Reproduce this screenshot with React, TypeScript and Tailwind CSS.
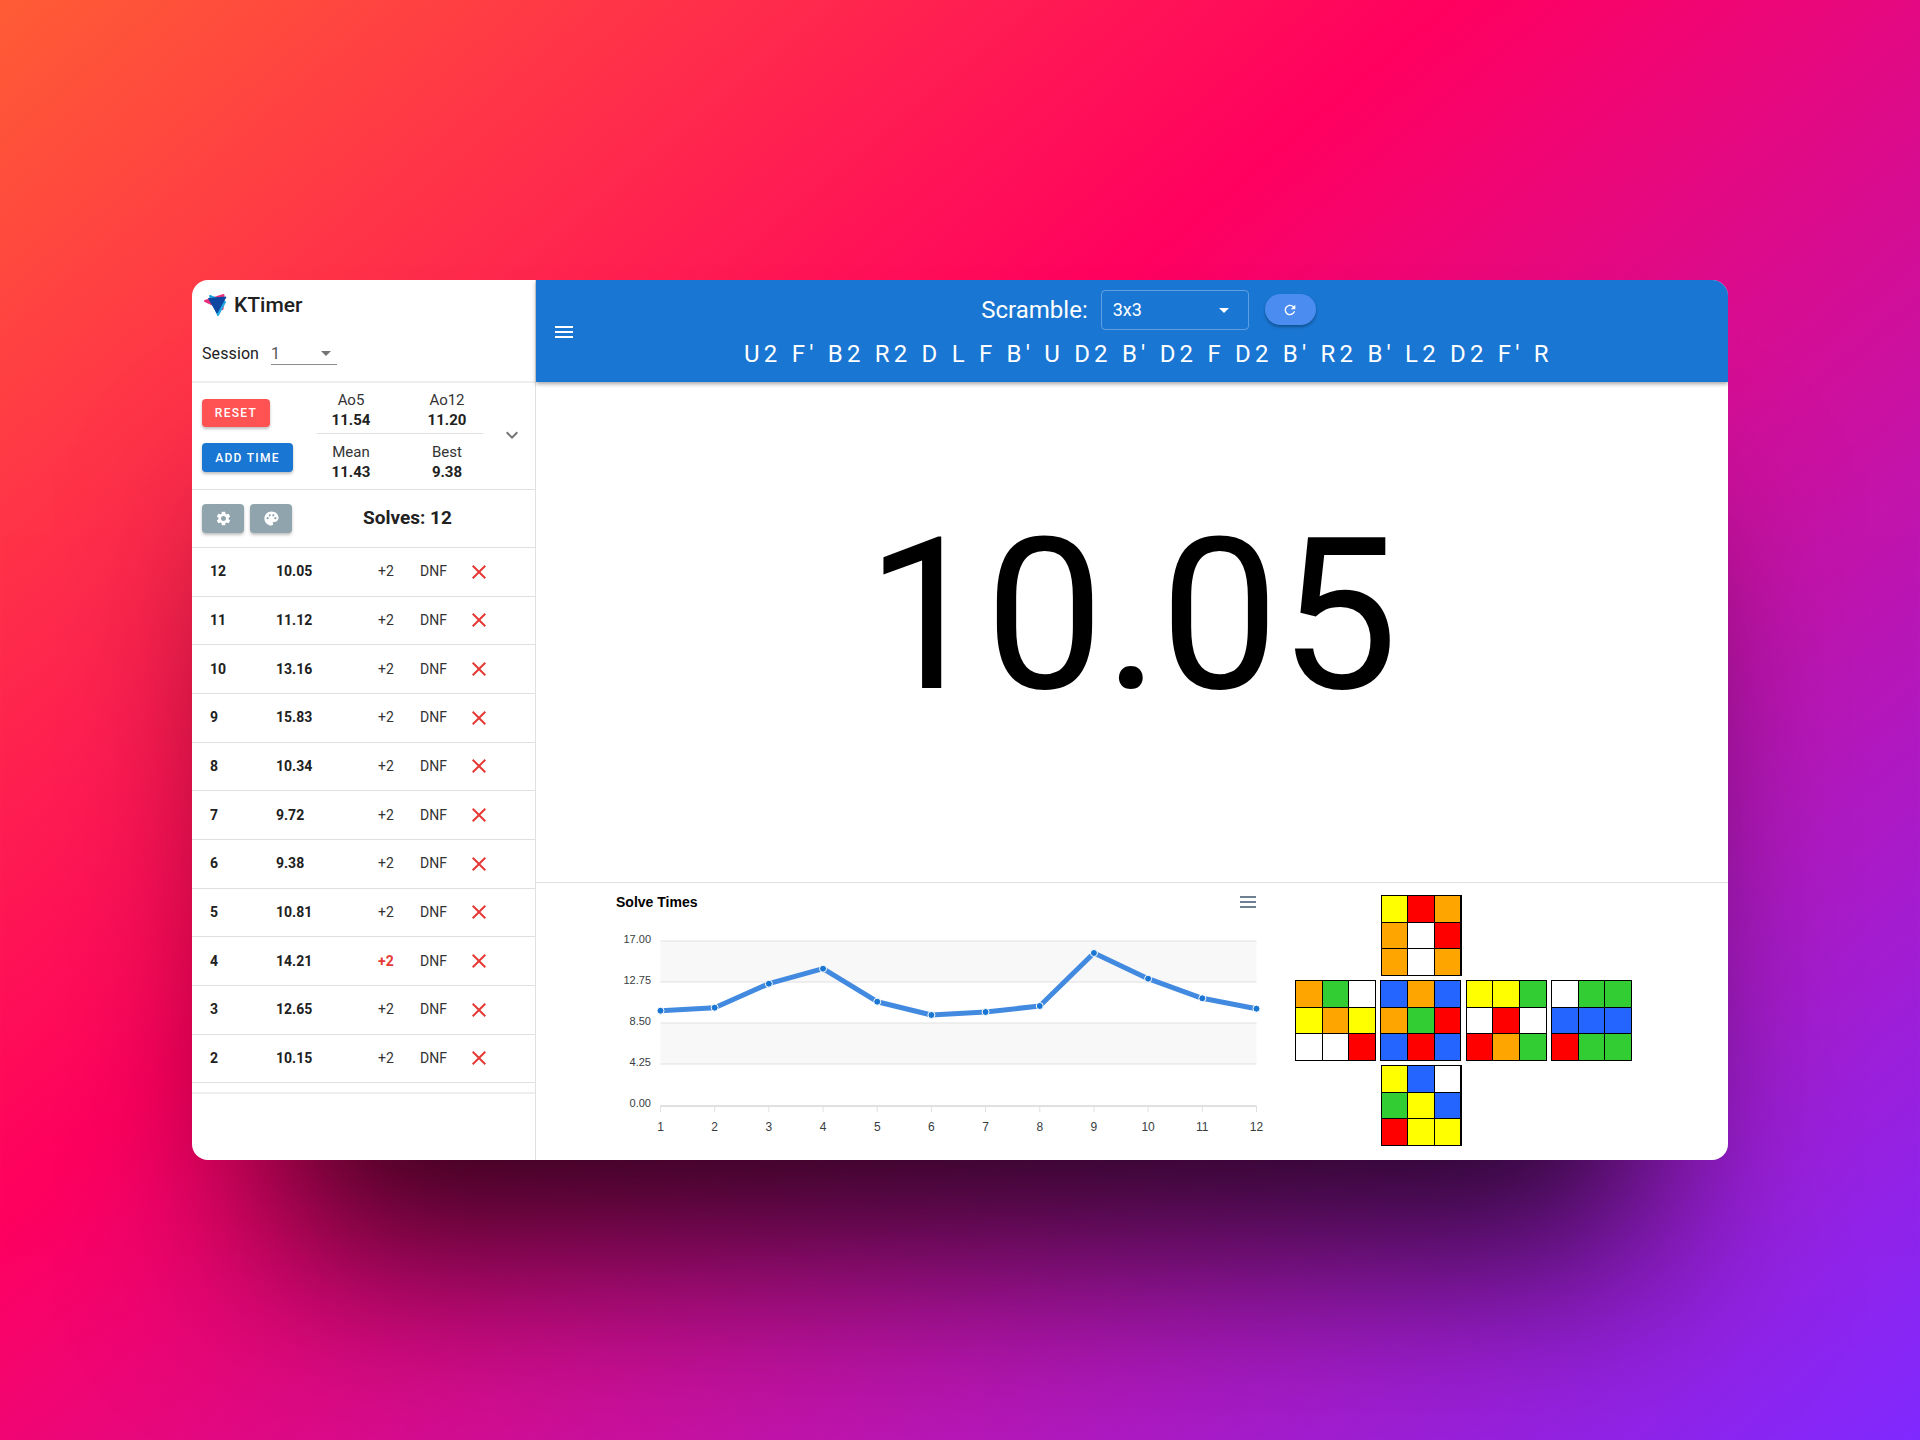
import { MdArrowDropDown, MdClose, MdExpandMore, MdMenu, MdPalette, MdRefresh, MdSettings } from "react-icons/md";

const solves = [
  { n: 12, time: "10.05" },
  { n: 11, time: "11.12" },
  { n: 10, time: "13.16" },
  { n: 9, time: "15.83" },
  { n: 8, time: "10.34" },
  { n: 7, time: "9.72" },
  { n: 6, time: "9.38" },
  { n: 5, time: "10.81" },
  { n: 4, time: "14.21", plus: true },
  { n: 3, time: "12.65" },
  { n: 2, time: "10.15" },
];

const Y = "bg-[#ffff00]";
const R = "bg-[#ff0000]";
const O = "bg-[#ffa500]";
const W = "bg-white";
const G = "bg-[#32cd32]";
const B = "bg-[#2465ff]";

const cube = {
  up: [Y, R, O, O, W, R, O, W, O],
  left: [O, G, W, Y, O, Y, W, W, R],
  front: [B, O, B, O, G, R, B, R, B],
  right: [Y, Y, G, W, R, W, R, O, G],
  back: [W, G, G, B, B, B, R, G, G],
  down: [Y, B, W, G, Y, B, R, Y, Y],
};

const Face = ({ cells }: { cells: string[] }) => (
  <div className="grid h-[81px] w-[81px] grid-cols-3 grid-rows-3 gap-px bg-black p-px">
    {cells.map((c, i) => (
      <div key={i} className={c} />
    ))}
  </div>
);

const Stat = ({ label, value }: { label: string; value: string }) => (
  <div className="flex w-[96px] flex-col items-center text-[15px] leading-[20px]">
    <span className="text-[#333]">{label}</span>
    <span className="font-bold">{value}</span>
  </div>
);

const pointY = [1010.7, 1007.7, 983.7, 968.7, 1001.7, 1015, 1012, 1006, 953, 978.7, 998.3, 1008.7];
const points = pointY.map((y, i) => ({ x: 60.5 + i * 54.18, y: y - 883 }));

const SolveChart = () => (
  <svg width="670" height="276" viewBox="0 0 670 276" className="shrink-0 font-['Liberation_Sans',sans-serif]">
    <text x="16" y="24" fontSize="14" fontWeight="700" fill="#000">Solve Times</text>
    <g stroke="#6e8192" strokeWidth="2">
      <line x1="640" x2="656" y1="14" y2="14" />
      <line x1="640" x2="656" y1="19" y2="19" />
      <line x1="640" x2="656" y1="24" y2="24" />
    </g>
    <rect x="60.5" y="58" width="596" height="41" fill="#f8f8f8" />
    <rect x="60.5" y="140" width="596" height="41" fill="#f8f8f8" />
    {[58, 99, 140, 181].map((y) => (
      <line key={y} x1="60.5" x2="656.5" y1={y} y2={y} stroke="#e0e0e0" />
    ))}
    <line x1="60.5" x2="656.5" y1="223" y2="223" stroke="#e0e0e0" strokeWidth="2" />
    {[
      ["17.00", 60],
      ["12.75", 101],
      ["8.50", 142],
      ["4.25", 183],
      ["0.00", 224],
    ].map(([t, y]) => (
      <text key={t} x="51" y={y} fontSize="11" textAnchor="end" fill="#373d3f">{t}</text>
    ))}
    {points.map((p, i) => (
      <g key={i}>
        <line x1={p.x} x2={p.x} y1="223" y2="229" stroke="#e0e0e0" />
        <text x={p.x} y="248" fontSize="12" textAnchor="middle" fill="#373d3f">{i + 1}</text>
      </g>
    ))}
    <polyline
      points={points.map((p) => `${p.x},${p.y}`).join(" ")}
      fill="none"
      stroke="#428ae0"
      strokeWidth="5"
      strokeLinejoin="round"
    />
    {points.map((p, i) => (
      <circle key={i} cx={p.x} cy={p.y} r="3.5" fill="#1976d2" stroke="#fff" strokeWidth="1" />
    ))}
  </svg>
);

const Logo = () => (
  <svg width="24" height="24" viewBox="0 0 24 24" className="shrink-0" strokeLinejoin="round" strokeWidth="2">
    <path d="M1 8 L19.5 2 L18.5 16 Z" fill="#e8327c" stroke="#e8327c" />
    <path d="M6 3 L21 9 L14 22 Z" fill="#22a7e0" stroke="#22a7e0" />
    <path d="M4.5 5.5 L22 4 L13 20 Z" fill="#0d47a1" stroke="#0d47a1" strokeWidth="1" />
  </svg>
);

const App = () => {
  return (
    <div className="flex h-[1440px] w-[1920px] items-center justify-center bg-[linear-gradient(140deg,#ff5c35_0%,#ff005f_40%,#8029ff_100%)] font-['Roboto',sans-serif] text-[#212121]">
      <div className="flex h-[880px] w-[1536px] overflow-hidden rounded-2xl bg-white shadow-[0_175px_180px_-80px_rgba(0,0,0,0.8)]">
        <aside className="flex h-full w-[344px] shrink-0 flex-col border-r border-[#e0e0e0]">
          <div className="flex h-[103px] flex-col border-b-2 border-[#eeeeee] pl-[10px]">
            <div className="mt-[12px] flex items-center gap-[6px] pl-[2px]">
              <Logo />
              <span className="text-[21px] leading-[26px] font-medium">KTimer</span>
            </div>
            <div className="mt-[24px] flex items-center gap-[12px]">
              <span className="text-[16px] leading-[24px] tracking-[0.1px]">Session</span>
              <div className="relative flex h-[22px] w-[66px] items-center border-b border-[#8c8c8c] text-[16px] text-[#555]">
                1
                <MdArrowDropDown className="absolute top-[-2px] right-[-1px] text-[#757575]" size={24} />
              </div>
            </div>
          </div>

          <div className="flex h-[107px] border-b border-[#e0e0e0] pl-[10px]">
            <div className="flex w-[115px] shrink-0 flex-col items-start gap-[16px] pt-[16px]">
              <button className="h-[28px] w-[68px] rounded bg-[#ff5252] text-[12px] font-medium tracking-[1.3px] text-white shadow-[0_2px_3px_rgba(0,0,0,0.25)]">
                RESET
              </button>
              <button className="h-[29px] w-[91px] rounded bg-[#1976d2] text-[12px] font-medium tracking-[1.3px] text-white shadow-[0_2px_3px_rgba(0,0,0,0.25)]">
                ADD TIME
              </button>
            </div>
            <div className="flex w-[166px] shrink-0 flex-col">
              <div className="ml-[-14px] mr-[-12px] flex h-[50px] items-start pt-[7px]">
                <Stat label="Ao5" value="11.54" />
                <Stat label="Ao12" value="11.20" />
              </div>
              <div className="h-px bg-[#e0e0e0]" />
              <div className="ml-[-14px] mr-[-12px] flex items-start pt-[8px]">
                <Stat label="Mean" value="11.43" />
                <Stat label="Best" value="9.38" />
              </div>
            </div>
            <div className="flex flex-1 items-center justify-center pb-[2px] pl-[5px]">
              <MdExpandMore className="text-[#757575]" size={24} />
            </div>
          </div>

          <div className="flex h-[58px] items-center border-b border-[#e0e0e0] pl-[10px]">
            <div className="flex gap-[6px]">
              <button className="flex h-[29px] w-[42px] items-center justify-center rounded bg-[#90a4ae] text-white shadow-[0_2px_3px_rgba(0,0,0,0.25)]">
                <MdSettings size={17} />
              </button>
              <button className="flex h-[29px] w-[42px] items-center justify-center rounded bg-[#90a4ae] text-white shadow-[0_2px_3px_rgba(0,0,0,0.25)]">
                <MdPalette size={17} />
              </button>
            </div>
            <span className="ml-[71px] text-[19px] font-bold">Solves: 12</span>
          </div>

          <div className="border-b-2 border-[#eeeeee] pb-[9px]">
            {solves.map((s) => (
              <div key={s.n} className="flex h-[48.67px] items-center border-b border-[#e0e0e0] text-[14px]">
                <span className="w-[84px] pl-[18px] font-bold">{s.n}</span>
                <span className="w-[102px] font-bold">{s.time}</span>
                <span className={`w-[42px] ${s.plus ? "font-bold text-[#e53935]" : "text-[#333]"}`}>+2</span>
                <span className="w-[47px] text-[#333]">DNF</span>
                <MdClose className="text-[#e53935]" size={24} />
              </div>
            ))}
          </div>
        </aside>

        <main className="flex min-w-0 flex-1 flex-col">
          <header className="relative z-10 flex h-[102px] shrink-0 items-center bg-[#1976d2] text-white shadow-[0_2px_4px_rgba(0,0,0,0.35)]">
            <MdMenu className="absolute left-[16px] top-[40px]" size={24} />
            <div className="flex w-full flex-col items-center pl-[33px]">
              <div className="mt-[-5px] flex items-center">
                <span className="text-[24px] leading-[40px]">Scramble:</span>
                <div className="ml-[13px] flex h-[40px] w-[148px] items-center justify-between rounded border border-white/30 pl-[11px] pr-[12px] text-[18px]">
                  3x3
                  <MdArrowDropDown size={24} />
                </div>
                <button className="ml-[16px] flex h-[31px] w-[51px] items-center justify-center rounded-full bg-[#4a8cf0] shadow-[0_2px_3px_rgba(0,0,0,0.3)]">
                  <MdRefresh size={16} />
                </button>
              </div>
              <div className="mt-[10px] text-[24px] leading-[28px] tracking-[4.2px]">
                U2 F' B2 R2 D L F B' U D2 B' D2 F D2 B' R2 B' L2 D2 F' R
              </div>
            </div>
          </header>

          <div className="flex h-[501px] shrink-0 items-center justify-center border-b border-[#e0e0e0] pb-[32px] text-[212px] leading-none text-black">
            10.05
          </div>

          <div className="flex min-h-0 flex-1 gap-[25px] pl-[64px]">
            <SolveChart />
            <div className="flex flex-col gap-[4px] pt-[12px]">
              <div className="pl-[85.5px]">
                <Face cells={cube.up} />
              </div>
              <div className="flex gap-[4.3px]">
                <Face cells={cube.left} />
                <Face cells={cube.front} />
                <Face cells={cube.right} />
                <Face cells={cube.back} />
              </div>
              <div className="pl-[85.5px]">
                <Face cells={cube.down} />
              </div>
            </div>
          </div>
        </main>
      </div>
    </div>
  );
};

export default App;
